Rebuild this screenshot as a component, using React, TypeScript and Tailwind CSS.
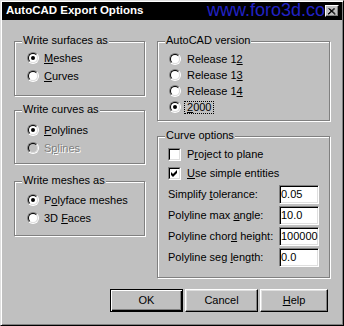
import type { ReactNode } from "react";

function Radio({ checked, disabled }: { checked?: boolean; disabled?: boolean }) {
  return (
    <span className="flex h-[12px] w-[12px] shrink-0 rounded-full border border-t-[#808080] border-l-[#808080] border-r-white border-b-white">
      <span
        className={`flex h-full w-full items-center justify-center rounded-full border border-t-black border-l-black border-r-[#dfdfdf] border-b-[#dfdfdf] ${
          disabled ? "bg-[#c0c0c0]" : "bg-white"
        }`}
      >
        {checked && <span className="h-[4px] w-[4px] rounded-full bg-black" />}
      </span>
    </span>
  );
}

function Check({ checked }: { checked?: boolean }) {
  return (
    <span className="flex h-[13px] w-[13px] shrink-0 border border-t-[#808080] border-l-[#808080] border-r-white border-b-white">
      <span className="flex h-full w-full items-center justify-center border border-t-black border-l-black border-r-[#dfdfdf] border-b-[#dfdfdf] bg-white">
        {checked && (
          <svg width="9" height="9" viewBox="0 0 9 9">
            <polygon points="1,3 3,5 7,1 7,4 3,8 1,6" fill="#000" />
          </svg>
        )}
      </span>
    </span>
  );
}

function Group({ title, className, children }: { title: string; className: string; children: ReactNode }) {
  return (
    <div className={`relative border border-[#808080] shadow-[inset_1px_1px_0_#fff,1px_1px_0_#fff] ${className}`}>
      <span className="absolute -top-[8px] left-[7px] bg-[#c0c0c0] px-[1px] leading-[13px]">{title}</span>
      {children}
    </div>
  );
}

function Field({ value }: { value: string }) {
  return (
    <div className="h-[19px] w-[40px] overflow-hidden whitespace-nowrap border border-t-[#808080] border-l-[#808080] border-r-white border-b-white bg-white pl-[1px] leading-[17px] shadow-[inset_1px_1px_0_#000,inset_-1px_-1px_0_#dfdfdf]">
      {value}
    </div>
  );
}

function Row({ label, value }: { label: ReactNode; value: string }) {
  return (
    <div className="flex items-center">
      <span className="w-[111px]">{label}</span>
      <Field value={value} />
    </div>
  );
}

export default function App() {
  return (
    <div className="flex h-[326px] w-[344px] flex-col border border-t-[#dfdfdf] border-l-[#dfdfdf] border-r-black border-b-black bg-[#c0c0c0] p-[1px] font-['Liberation_Sans',Arial,sans-serif] text-[11px] text-black shadow-[inset_1px_1px_0_#fff,inset_-1px_-1px_0_#808080]">
      {/* title bar */}
      <div className="relative flex h-[18px] shrink-0 items-center justify-between bg-black pl-[4px] pr-[3px]">
        <span className="text-[11.5px] font-bold text-white">AutoCAD Export Options</span>
        <span className="absolute left-[205px] top-[-3px] text-[18px] leading-[22px] text-[#2222c4]">www.foro3d.com</span>
        <span className="relative z-10 flex h-[12px] w-[14px] items-center justify-center border border-t-white border-l-white border-r-black border-b-black bg-[#c0c0c0] shadow-[inset_-1px_-1px_0_#808080]">
          <svg width="8" height="7" viewBox="0 0 8 7">
            <path d="M0.5 0.5 L7 6.5 M1.5 0.5 L7.5 6 M7 0.5 L0.5 6.5 M6 0.5 L0 6" stroke="#000" strokeWidth="1" fill="none" />
          </svg>
        </span>
      </div>

      <div className="flex flex-col pl-[12px] pt-[21px]">
        <div className="flex gap-[12px]">
          {/* left column */}
          <div className="flex w-[131px] flex-col">
            <Group title="Write surfaces as" className="h-[55px] pl-[12px] pt-[7px]">
              <div className="flex h-[18px] items-center gap-[5px]">
                <Radio checked />
                <span><u>M</u>eshes</span>
              </div>
              <div className="flex h-[18px] items-center gap-[5px]">
                <Radio />
                <span><u>C</u>urves</span>
              </div>
            </Group>
            <Group title="Write curves as" className="mt-[14px] h-[54px] pl-[12px] pt-[10px]">
              <div className="flex h-[18px] items-center gap-[5px]">
                <Radio checked />
                <span><u>P</u>olylines</span>
              </div>
              <div className="flex h-[18px] items-center gap-[5px]">
                <Radio disabled />
                <span className="text-[#808080] [text-shadow:1px_1px_0_#fff]">S<u>p</u>lines</span>
              </div>
            </Group>
            <Group title="Write meshes as" className="mt-[17px] h-[55px] pl-[12px] pt-[9px]">
              <div className="flex h-[18px] items-center gap-[5px]">
                <Radio checked />
                <span>P<u>o</u>lyface meshes</span>
              </div>
              <div className="flex h-[18px] items-center gap-[5px]">
                <Radio />
                <span>3D <u>F</u>aces</span>
              </div>
            </Group>
          </div>

          {/* right column */}
          <div className="flex w-[173px] flex-col">
            <Group title="AutoCAD version" className="h-[80px] pl-[11px] pt-[9px]">
              <div className="flex h-[16px] items-center gap-[6px]">
                <Radio />
                <span>Release 1<u>2</u></span>
              </div>
              <div className="flex h-[16px] items-center gap-[6px]">
                <Radio />
                <span>Release 1<u>3</u></span>
              </div>
              <div className="flex h-[16px] items-center gap-[6px]">
                <Radio />
                <span>Release 1<u>4</u></span>
              </div>
              <div className="flex h-[16px] items-center gap-[6px]">
                <Radio checked />
                <span className="-ml-[3px] border border-dotted border-black px-[2px] leading-[11px]"><u>2</u>000</span>
              </div>
            </Group>
            <Group title="Curve options" className="mt-[15px] h-[142px] pl-[10px] pt-[8px]">
              <div className="flex h-[19px] items-center gap-[6px]">
                <Check />
                <span>P<u>r</u>oject to plane</span>
              </div>
              <div className="flex h-[19px] items-center gap-[6px]">
                <Check checked />
                <span><u>U</u>se simple entities</span>
              </div>
              <div className="mt-[2px] flex flex-col gap-[2px]">
                <Row label={<>Simplify <u>t</u>olerance:</>} value="0.05" />
                <Row label={<>Polyline max <u>a</u>ngle:</>} value="10.0" />
                <Row label={<>Polyline chor<u>d</u> height:</>} value="100000" />
                <Row label={<>Polyline seg <u>l</u>ength:</>} value="0.0" />
              </div>
            </Group>
          </div>
        </div>

        {/* buttons */}
        <div className="ml-[96px] mt-[11px] flex gap-[2px]">
          <button className="flex h-[23px] w-[73px] items-center justify-center border border-black shadow-[inset_1px_1px_0_#fff,inset_-1px_-1px_0_#000,inset_-2px_-2px_0_#808080]">
            OK
          </button>
          <button className="flex h-[23px] w-[73px] items-center justify-center border border-t-white border-l-white border-r-black border-b-black shadow-[inset_-1px_-1px_0_#808080,inset_1px_1px_0_#dfdfdf]">
            Cancel
          </button>
          <button className="flex h-[23px] w-[68px] items-center justify-center border border-t-white border-l-white border-r-black border-b-black shadow-[inset_-1px_-1px_0_#808080,inset_1px_1px_0_#dfdfdf]">
            <span><u>H</u>elp</span>
          </button>
        </div>
      </div>
    </div>
  );
}
